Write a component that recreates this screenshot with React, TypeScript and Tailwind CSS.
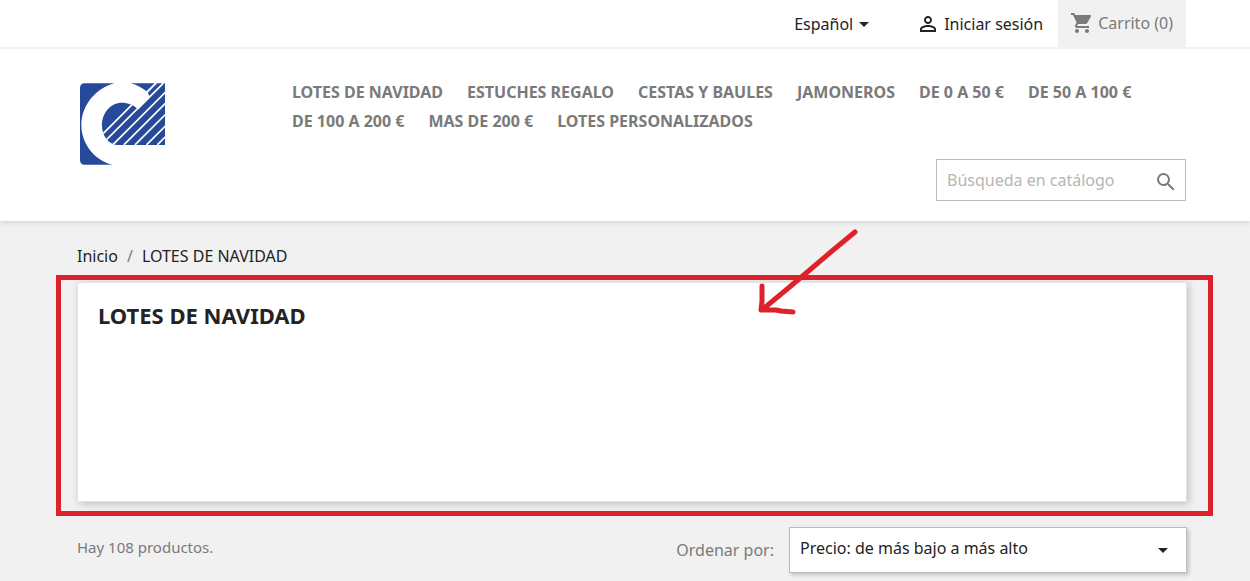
import { MdArrowDropDown, MdPersonOutline, MdSearch, MdShoppingCart } from "react-icons/md";

const categories = [
  "LOTES DE NAVIDAD",
  "ESTUCHES REGALO",
  "CESTAS Y BAULES",
  "JAMONEROS",
  "DE 0 A 50 €",
  "DE 50 A 100 €",
  "DE 100 A 200 €",
  "MAS DE 200 €",
  "LOTES PERSONALIZADOS",
];

function Logo() {
  return (
    <svg viewBox="0 0 252 242" className="h-[82px] w-[85px]" role="img" aria-label="Logotipo">
      <defs>
        <clipPath id="logo-hatch">
          <path d="M107 183C84 180 65 156 65 125C65 88 91 58 124 58C143 58 158 65 171 76L247 0H252V183Z" />
        </clipPath>
      </defs>
      <path d="M14 0H102C50 14 4 62 4 124C4 180 44 230 97 242H14Q0 242 0 228V14Q0 0 14 0Z" fill="#27499a" />
      <path d="M150 0H221L197 24C184 13 168 4 150 0Z" fill="#27499a" />
      <path d="M201 28L229 0H247L207 40Z" fill="#27499a" />
      <path
        d="M107 183C84 180 65 156 65 125C65 88 91 58 124 58C143 58 158 65 171 76L247 0H252V183Z"
        fill="#27499a"
      />
      <g clipPath="url(#logo-hatch)" stroke="#fff" strokeWidth="5">
        <path d="M35 183L218 0M63 183L246 0M97 183L280 0M130 183L313 0M163 183L346 0M197 183L380 0M229 183L412 0" />
      </g>
      <path d="M171 76L247 0" stroke="#fff" strokeWidth="5" />
    </svg>
  );
}

function TopBar() {
  return (
    <div className="border-b-2 border-[#f1f1f1] pr-16">
      <div className="flex h-[47px] items-center justify-end">
        <div className="relative mr-12 flex items-center">
          <select
            aria-label="Idioma"
            className="cursor-pointer appearance-none bg-transparent pr-[14px] text-base text-[#232323] outline-none"
          >
            <option>Español</option>
          </select>
          <MdArrowDropDown className="pointer-events-none absolute -right-2 size-6 text-[#232323]" />
        </div>
        <a href="#login" className="mr-[15px] flex items-center gap-1 text-[#232323]">
          <MdPersonOutline className="size-6" />
          Iniciar sesión
        </a>
        <a href="#carrito" className="flex h-[47px] items-center gap-1 bg-[#f1f1f1] pr-[13px] pb-[2px] pl-3 text-[#7a7a7a]">
          <MdShoppingCart className="size-6" />
          Carrito (0)
        </a>
      </div>
    </div>
  );
}

function Header() {
  return (
    <header className="relative bg-white shadow-[0_2px_5px_0_rgba(0,0,0,0.11)]">
      <TopBar />
      <div className="flex pr-16 pb-5 pl-20">
        <a href="#inicio" className="mt-[34px] shrink-0">
          <Logo />
        </a>
        <div className="ml-[127px] flex-1 pt-[31px]">
          <nav className="flex flex-wrap gap-x-6 gap-y-[5px] font-bold text-[#7a7a7a]">
            {categories.map((name) => (
              <a key={name} href="#categoria" className="leading-6">
                {name}
              </a>
            ))}
          </nav>
          <form className="mt-[26px] ml-auto flex h-[42px] w-[250px] items-center border border-[#bdbdbd] pr-[7px] pl-[10px]">
            <input
              type="text"
              aria-label="Buscar"
              placeholder="Búsqueda en catálogo"
              className="min-w-0 flex-1 bg-transparent outline-none placeholder:text-[#b5b5b5]"
            />
            <button type="button" aria-label="Buscar en catálogo" className="pt-1 text-[#7a7a7a]">
              <MdSearch className="size-6" />
            </button>
          </form>
        </div>
      </div>
    </header>
  );
}

function Annotation() {
  return (
    <>
      <div className="pointer-events-none absolute -top-[7px] -right-[26px] -bottom-[14px] -left-[21px] border-[5px] border-[#dd222c]" />
      <svg
        viewBox="0 0 110 95"
        className="pointer-events-none absolute -top-[58px] right-[327px] h-[95px] w-[110px]"
        fill="none"
        stroke="#dd222c"
        strokeWidth="5"
        strokeLinecap="round"
        strokeLinejoin="round"
        aria-hidden="true"
      >
        <path d="M105 8L82 27L55 50L36 66L13 85M12 62L12 77L11 86L26 86L31 87L43 88" />
      </svg>
    </>
  );
}

export default function App() {
  return (
    <div className="min-h-screen bg-[#f1f1f1] font-['Noto_Sans',sans-serif] text-base text-[#232323]">
      <Header />
      <main className="pt-[23px] pr-[63px] pb-2 pl-[77px]">
        <nav aria-label="Ruta" className="flex gap-[9px] leading-6">
          <a href="#inicio">Inicio</a>
          <span className="text-[#7a7a7a]">/</span>
          <a href="#lotes">LOTES DE NAVIDAD</a>
        </nav>
        <section className="relative mt-[14px]">
          <div className="min-h-[220px] border border-[#e3e3e3] bg-white px-5 pt-4 shadow-[2px_2px_8px_0_rgba(0,0,0,0.2)]">
            <h1 className="text-[22px] leading-8 font-bold">LOTES DE NAVIDAD</h1>
          </div>
          <Annotation />
        </section>
        <div className="mt-[25px] flex items-center justify-between text-[#7a7a7a]">
          <p className="pb-[6px] text-[15px]">Hay 108 productos.</p>
          <div className="flex items-center">
            <label htmlFor="orden" className="mr-[15px]">
              Ordenar por:
            </label>
            <div className="relative flex items-center">
              <select
                id="orden"
                className="h-[46px] w-[398px] appearance-none border border-[#bdbdbd] bg-white pr-10 pb-1 pl-[10px] text-[#232323] shadow-[2px_2px_4px_0_rgba(0,0,0,0.2)] outline-none"
              >
                <option>Precio: de más bajo a más alto</option>
              </select>
              <MdArrowDropDown className="pointer-events-none absolute right-3 size-6 text-[#232323]" />
            </div>
          </div>
        </div>
      </main>
    </div>
  );
}
